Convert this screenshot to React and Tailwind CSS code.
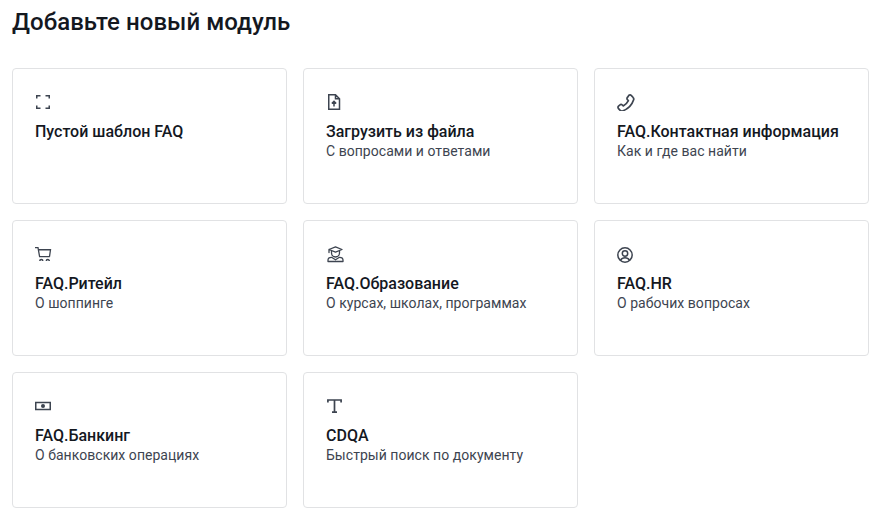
const sw = { fill: "none", stroke: "currentColor", strokeWidth: 1.5, strokeLinecap: "round", strokeLinejoin: "round" };

const icons = {
    frame: (
        <path {...sw} strokeLinecap="butt" strokeLinejoin="miter" d="M1.750 5.500V2.750H5.500M10.500 2.750h3.750V5.500M1.750 12.500v2.750H5.500M14.250 12.500v2.750H10.500" />
    ),
    upload: (
        <path {...sw} strokeLinecap="butt" strokeLinejoin="miter" d="M9.500 1.750H2.750v14.500h10.750V5.750zM9.500 1.750v4h4M8 13.500V8.500M5.800 10.500L8 8.300l2.200 2.200" />
    ),
    phone: (
        <g transform="translate(-1.900 -0.600) scale(1.220)">
            <path {...sw} strokeWidth="1.400" d="M11.200 2.500c.6-.6 1.500-.6 2 0l1.600 1.700c.5.5.6 1.200.4 1.800-1.500 4.500-4.700 7.700-9.200 9.200-.6.200-1.300.100-1.800-.4l-1.400-1.500c-.6-.6-.6-1.500 0-2l1.200-1c.5-.5 1.300-.5 1.800 0l.9.800c1.800-.9 3.300-2.500 4.200-4.300l-.8-.9c-.5-.5-.5-1.300 0-1.800z" />
        </g>
    ),
    cart: (
        <>
            <path {...sw} strokeWidth="1.300" strokeLinecap="butt" strokeLinejoin="miter" d="M0 2.600h3l1.600 9h10.200M3.400 4.750h12.100l-1 6.850" />
            <path {...sw} strokeLinecap="butt" d="M4.800 16a1.500 1.500 0 0 1 3 0M11.300 16a1.500 1.500 0 0 1 3 0" />
        </>
    ),
    edu: (
        <>
            <path {...sw} strokeWidth="1.300" d="M9.500 1.800l6.500 2.700-6.500 2.700L3 4.500zM5.500 5.800v2.200a4 4 0 0 0 8 0V5.800M3 4.500v3" />
            <path {...sw} strokeWidth="1.300" d="M2 16.500v-1.500c0-1.700 1.500-2.700 3.500-2.700l4 2.500 4-2.500c2 0 3.500 1 3.500 2.700v1.500z" />
        </>
    ),
    person: (
        <>
            <circle cx="8" cy="10" r="7.200" {...sw} />
            <circle cx="8" cy="8.500" r="2.700" {...sw} />
            <path {...sw} d="M3.500 15.300c1-1.700 2.600-2.500 4.500-2.500s3.500.8 4.500 2.500" />
        </>
    ),
    money: (
        <>
            <rect x="0.750" y="5.500" width="14.500" height="7" {...sw} strokeLinejoin="miter" />
            <circle cx="8" cy="9" r="2" fill="currentColor" />
        </>
    ),
    text: (
        <path {...sw} strokeWidth="1.700" strokeLinecap="butt" strokeLinejoin="miter" d="M1.900 5.500V3h13.200v2.500M8.500 3v12.200M6 15.200h5" />
    ),
};

const modules = [
    { icon: "frame", title: "Пустой шаблон FAQ" },
    { icon: "upload", title: "Загрузить из файла", text: "С вопросами и ответами" },
    { icon: "phone", title: "FAQ.Контактная информация", text: "Как и где вас найти" },
    { icon: "cart", title: "FAQ.Ритейл", text: "О шоппинге" },
    { icon: "edu", title: "FAQ.Образование", text: "О курсах, школах, программах" },
    { icon: "person", title: "FAQ.HR", text: "О рабочих вопросах" },
    { icon: "money", title: "FAQ.Банкинг", text: "О банковских операциях" },
    { icon: "text", title: "CDQA", text: "Быстрый поиск по документу" },
];

export default function App() {
    return (
        <div className="w-[882px] h-[520px] overflow-hidden bg-white px-3 pt-2 font-['Roboto',sans-serif]">
            <h1 className="text-2xl leading-[28px] font-medium tracking-[0.05px] text-[#14181f]">Добавьте новый модуль</h1>
            <div className="mt-[32px] grid grid-cols-[275px_275px_275px] gap-4">
                {modules.map((m) => (
                    <div key={m.title} className="h-[136px] rounded border border-[#e1e2e4] px-[22px] pt-[24px]">
                        <svg width="18" height="18" viewBox="0 0 18 18" className="text-[#3d4450]">
                            {icons[m.icon]}
                        </svg>
                        <div className="mt-[10px] text-base leading-[22px] font-medium text-[#14181f]">{m.title}</div>
                        {m.text && <div className="text-sm leading-[16px] tracking-[0.04px] text-[#3d4450]">{m.text}</div>}
                    </div>
                ))}
            </div>
        </div>
    );
}
